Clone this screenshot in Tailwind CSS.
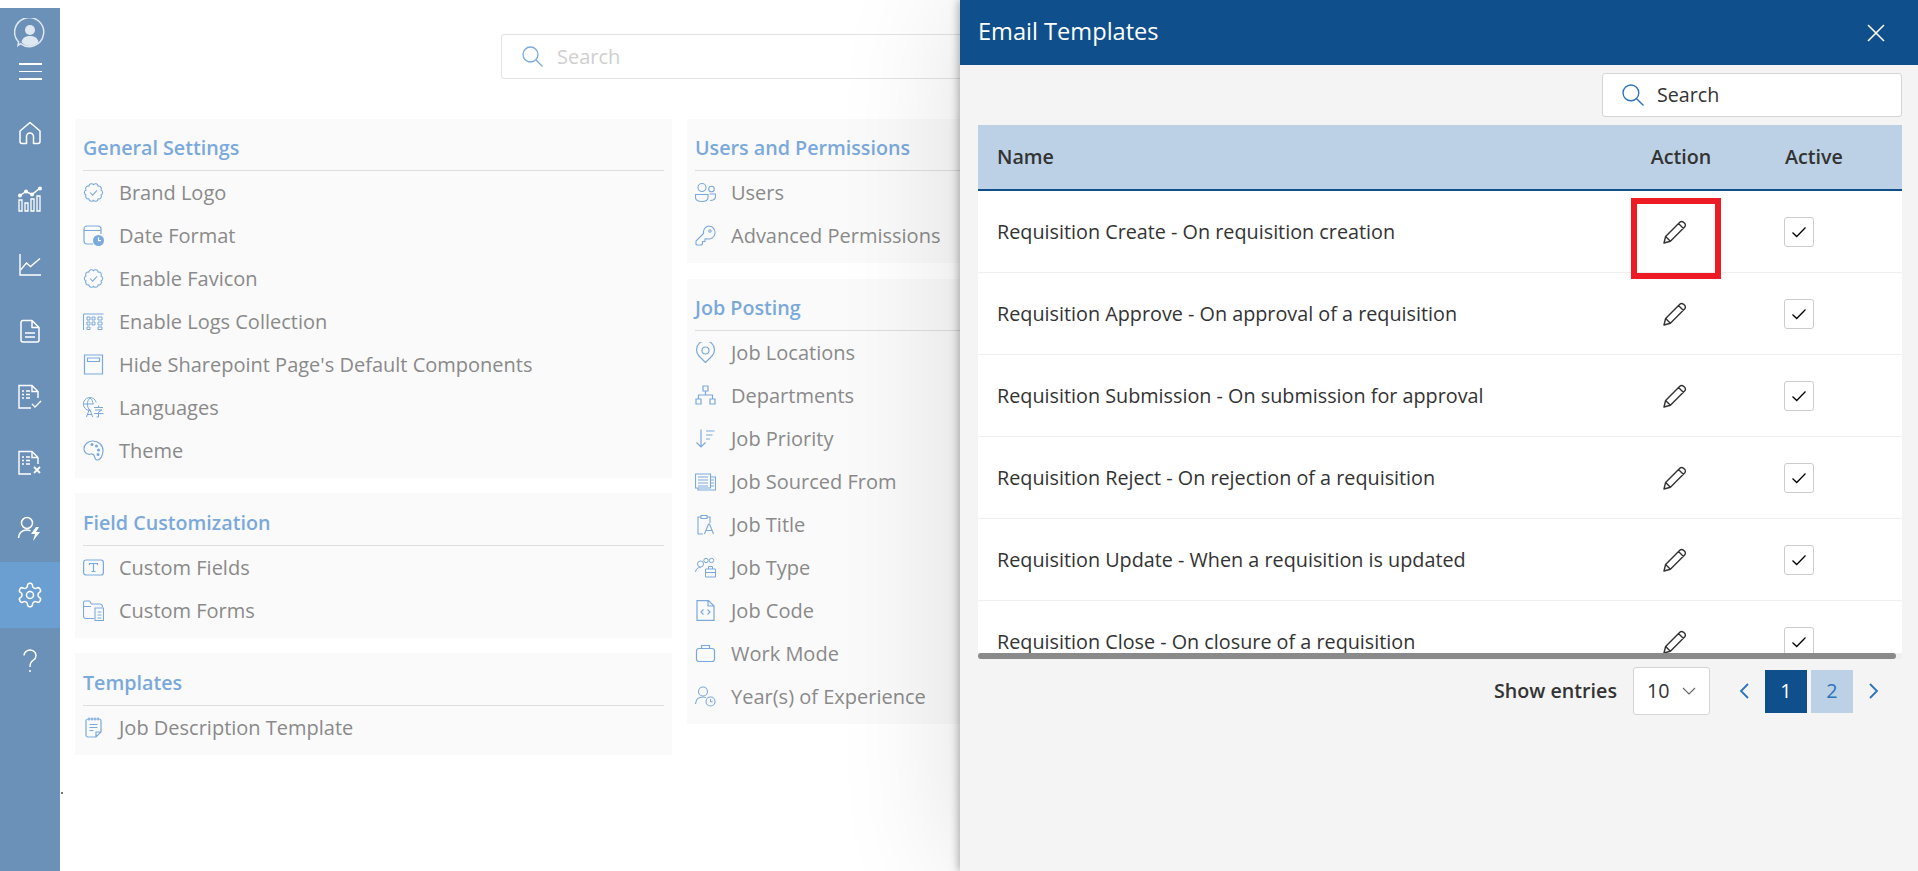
<!DOCTYPE html>
<html lang="en">
<head>
    <meta charset="UTF-8">
    <title>Email Templates</title>
    <script src="https://cdn.jsdelivr.net/npm/@tailwindcss/browser@4"></script>
</head>
<body class="bg-white overflow-hidden font-['Open_Sans',sans-serif]">
    <!-- icon sheet -->
    <svg class="hidden">
        <symbol id="pencil" viewBox="0 0 26 26"><path d="M2 24l1.600-6.500L17.800 3.200a2.600 2.600 0 0 1 3.700 0l1.100 1.100a2.600 2.600 0 0 1 0 3.700L8.400 22.300z M3.600 17.500l4.800 4.800 M16.500 4.500l5 5" fill="none" stroke="currentColor" stroke-width="1.400" stroke-linejoin="round"/></symbol>
        <symbol id="check" viewBox="0 0 16 16"><path d="M1.500 8.500l4.200 4 8.800-9" fill="none" stroke="currentColor" stroke-width="1.300"/></symbol>
        <symbol id="badge" viewBox="0 0 24 24"><path d="M12 3A3 3 0 0 1 17.290 4.720A3 3 0 0 1 20.560 9.220A3 3 0 0 1 20.560 14.780A3 3 0 0 1 17.290 19.280A3 3 0 0 1 12 21A3 3 0 0 1 6.710 19.280A3 3 0 0 1 3.440 14.780A3 3 0 0 1 3.440 9.220A3 3 0 0 1 6.710 4.720A3 3 0 0 1 12 3z M8 12l3 3 5-5.500"/></symbol>
    </svg>

    <div class="flex h-[871px]">
        <!-- sidebar -->
        <aside class="w-[60px] mt-2 bg-[#6c91b8] text-white flex flex-col items-center shrink-0">
            <div class="h-[92px] w-full flex flex-col items-center pt-[10px]">
                <svg class="w-[32px] h-[32px] text-[#dfe8f1]" viewBox="0 0 32 32" fill="none" stroke="currentColor" stroke-width="1.500"><path d="M4 27.500l2.500-1.800A14.500 14.500 0 1 0 4.600 24z"/><circle cx="16" cy="12" r="5" fill="currentColor" stroke="none"/><path d="M7.500 24c1-4.500 4.500-6 8.500-6s7.500 1.500 8.500 6c-2 2.500-5 4-8.500 4s-6.500-1.500-8.500-4z" fill="currentColor" stroke="none"/></svg>
                <div class="mt-[13px] w-[23px] flex flex-col gap-[6px]">
                    <div class="h-[1.500px] bg-white"></div>
                    <div class="h-[1.500px] bg-white"></div>
                    <div class="h-[1.500px] bg-white"></div>
                </div>
            </div>
            <div class="h-[66px] w-full flex items-center justify-center"><svg class="w-[24px] h-[24px]" viewBox="0 0 24 24" fill="none" stroke="currentColor" stroke-width="1.500" stroke-linejoin="round"><path d="M2 10L12 1.500 22 10v10.500a2 2 0 0 1-2 2h-4.500v-7a3.500 3.500 0 0 0-7 0v7H4a2 2 0 0 1-2-2z"/></svg></div>
            <div class="h-[66px] w-full flex items-center justify-center"><svg class="w-[26px] h-[26px]" viewBox="0 0 26 26" fill="none" stroke="currentColor" stroke-width="1.300"><path d="M2 14h3v11H2z M8 17h3v8H8z M14 13h3v12h-3z M20 10h3v15h-3z"/><path d="M3 9.500l6-4 6 3 8-6.500" stroke-width="1.500"/><circle cx="3" cy="9.500" r="1.300" fill="currentColor"/><circle cx="9" cy="5.500" r="1.300" fill="currentColor"/><circle cx="15" cy="8.500" r="1.300" fill="currentColor"/><circle cx="23" cy="2.500" r="1.300" fill="currentColor"/></svg></div>
            <div class="h-[66px] w-full flex items-center justify-center"><svg class="w-[24px] h-[24px]" viewBox="0 0 24 24" fill="none" stroke="currentColor" stroke-width="1.400"><path d="M2 1v21h21"/><path d="M2.500 17l6-7 4 3.500L22 5.500"/></svg></div>
            <div class="h-[66px] w-full flex items-center justify-center"><svg class="w-[24px] h-[24px]" viewBox="0 0 24 24" fill="none" stroke="currentColor" stroke-width="1.500" stroke-linejoin="round"><path d="M5 1.500h9l7 7V21a2 2 0 0 1-2 2H5a2 2 0 0 1-2-2V3.500a2 2 0 0 1 2-2z M14 1.500V8.500h7 M7 14h10 M7 18h10"/></svg></div>
            <div class="h-[66px] w-full flex items-center justify-center"><svg class="w-[26px] h-[26px]" viewBox="0 0 26 26" fill="none" stroke="currentColor" stroke-width="1.400"><path d="M14 24H2V1.500h13l6 6V14 M15 1.500v6h6"/><path d="M5 7h2M9 7h4M5 10.500h2M9 10.500h4M5 14h2M9 14h4"/><path d="M15 20l3 3 6-6"/></svg></div>
            <div class="h-[66px] w-full flex items-center justify-center"><svg class="w-[26px] h-[26px]" viewBox="0 0 26 26" fill="none" stroke="currentColor" stroke-width="1.400"><path d="M14 24H2V1.500h13l6 6V14 M15 1.500v6h6"/><path d="M5 7h2M9 7h4M5 10.500h2M9 10.500h4M5 14h2M9 14h4"/><path d="M17 17l6 6M23 17l-6 6" stroke-width="1.800"/></svg></div>
            <div class="h-[66px] w-full flex items-center justify-center"><svg class="w-[26px] h-[26px]" viewBox="0 0 26 26" fill="none" stroke="currentColor" stroke-width="1.500"><circle cx="10" cy="7" r="5.500"/><path d="M1.500 22c.5-5 3.500-8 8.500-8 1.500 0 2.500.3 3.500.8"/><path d="M19 11l-5 7h4l-2 7 7-9h-4l3-5z" fill="currentColor" stroke="none"/></svg></div>
            <div class="h-[66px] w-full bg-[#6b9fd2] flex items-center justify-center"><svg class="w-[28px] h-[28px]" viewBox="0 0 24 24" fill="none" stroke="currentColor" stroke-width="1.300" stroke-linejoin="round"><circle cx="12" cy="12" r="3"/><path d="M12.220 2h-.44a2 2 0 0 0-2 2v.18a2 2 0 0 1-1 1.730l-.43.25a2 2 0 0 1-2 0l-.15-.08a2 2 0 0 0-2.730.73l-.22.38a2 2 0 0 0 .73 2.730l.15.1a2 2 0 0 1 1 1.720v.51a2 2 0 0 1-1 1.740l-.15.09a2 2 0 0 0-.73 2.730l.22.38a2 2 0 0 0 2.730.73l.15-.08a2 2 0 0 1 2 0l.43.25a2 2 0 0 1 1 1.730V20a2 2 0 0 0 2 2h.44a2 2 0 0 0 2-2v-.18a2 2 0 0 1 1-1.730l.43-.25a2 2 0 0 1 2 0l.15.08a2 2 0 0 0 2.730-.73l.22-.39a2 2 0 0 0-.73-2.730l-.15-.08a2 2 0 0 1-1-1.740v-.5a2 2 0 0 1 1-1.740l.15-.09a2 2 0 0 0 .73-2.730l-.22-.38a2 2 0 0 0-2.730-.73l-.15.08a2 2 0 0 1-2 0l-.43-.25a2 2 0 0 1-1-1.730V4a2 2 0 0 0-2-2z"/></svg></div>
            <div class="h-[66px] w-full flex items-center justify-center"><svg class="w-[16px] h-[24px]" viewBox="0 0 16 24" fill="none" stroke="currentColor" stroke-width="1.400"><path d="M2 6.500a6 5.500 0 1 1 9.500 4.500C9 13 8 14 8 18"/><circle cx="8" cy="22" r="1" fill="currentColor" stroke="none"/></svg></div>
        </aside>

        <!-- settings page -->
        <main class="flex-1 pl-[15px]">
            <div class="ml-[426px] mt-[34px] w-[800px] h-[45px] border border-[#e3e3e3] rounded-[3px] flex items-center pl-[20px] gap-[14px]">
                <svg class="w-[21px] h-[21px] text-[#7aa9dc]" viewBox="0 0 21 21" fill="none" stroke="currentColor" stroke-width="1.300"><circle cx="8.500" cy="8.500" r="7.500"/><path d="M14 14l6.500 6.500"/></svg>
                <span class="text-[20px] text-[#cfcfcf]">Search</span>
            </div>
            <div class="mt-[40px] flex gap-[15px] items-start">
                <div class="w-[597px] flex flex-col gap-[15px]">
                    <section class="bg-[#fafafa] px-2 pb-[6px]">
                        <h2 class="h-[52px] pt-[15px] border-b border-[#dedede] text-[19.700px] leading-[28px] font-semibold text-[#7aa9dc]">General Settings</h2>
                        <div class="h-[43px] flex items-center gap-[15px] text-[20px] text-[#8a8a8a]"><svg class="w-[21px] h-[21px] text-[#7aa9dc] shrink-0" fill="none" stroke="currentColor" stroke-width="1.200"><use href="#badge"/></svg>Brand Logo</div>
                        <div class="h-[43px] flex items-center gap-[15px] text-[20px] text-[#8a8a8a]"><svg class="w-[21px] h-[21px] text-[#7aa9dc] shrink-0" viewBox="0 0 21 21" fill="none" stroke="currentColor" stroke-width="1.200"><path d="M10 19H4a3 3 0 0 1-3-3V4a3 3 0 0 1 3-3h11a3 3 0 0 1 3 3v5 M1 5.500h17"/><circle cx="15.500" cy="15.500" r="5.500" fill="currentColor" stroke="none"/><path d="M15.500 12.500v3.200h2.500" stroke="#fff"/></svg>Date Format</div>
                        <div class="h-[43px] flex items-center gap-[15px] text-[20px] text-[#8a8a8a]"><svg class="w-[21px] h-[21px] text-[#7aa9dc] shrink-0" fill="none" stroke="currentColor" stroke-width="1.200"><use href="#badge"/></svg>Enable Favicon</div>
                        <div class="h-[43px] flex items-center gap-[15px] text-[20px] text-[#8a8a8a]"><svg class="w-[21px] h-[21px] text-[#7aa9dc] shrink-0" viewBox="0 0 21 21" fill="none" stroke="currentColor" stroke-width="1"><path d="M.500 3v16M.500 3h20"/><path d="M4 6h3v3H4z M9 6h3v3H9z M15 6h4v3h-4z M4 11h3v3H4z M9 11h3v3H9z M15 11h4v3h-4z M4 16h3v2.500H4z M15 16h4v2.500h-4z"/></svg>Enable Logs Collection</div>
                        <div class="h-[43px] flex items-center gap-[15px] text-[20px] text-[#8a8a8a]"><svg class="w-[21px] h-[21px] text-[#7aa9dc] shrink-0" viewBox="0 0 21 21" fill="none" stroke="currentColor" stroke-width="1.200"><path d="M1.500 1h18v19h-18z M4.500 4h12v3.500h-12z"/></svg>Hide Sharepoint Page's Default Components</div>
                        <div class="h-[43px] flex items-center gap-[15px] text-[20px] text-[#8a8a8a]"><svg class="w-[21px] h-[21px] text-[#7aa9dc] shrink-0" viewBox="0 0 21 21" fill="none" stroke="currentColor" stroke-width="1"><path d="M7 13.500a6.500 6.500 0 1 1 6.200-8 M7 1c-3.500 3-3.500 9 0 12.500M7 1c2 1.500 3 4 3 6 M.500 7h10"/><path d="M3.500 20l2.800-7.500h.6L9.700 20M4.600 17.500h4 M11 10.500h9M15.500 8.500v2 M12 13h7l-3.500 2v5h-2 M11 16.500h9.500"/></svg>Languages</div>
                        <div class="h-[43px] flex items-center gap-[15px] text-[20px] text-[#8a8a8a]"><svg class="w-[21px] h-[21px] text-[#7aa9dc] shrink-0" viewBox="0 0 21 21" fill="none" stroke="currentColor" stroke-width="1.200"><path d="M10 1c5.500 0 10 4 10 9.500 0 5.500-3 9.500-5.500 9.500-2.500 0-2.500-2-3-3.500-.6-2-2-3-4-2.500C5 15 1 13 1 9c0-4.500 4-8 9-8z"/><circle cx="9" cy="4.500" r=".9" fill="currentColor"/><circle cx="13.500" cy="6" r=".9" fill="currentColor"/><circle cx="15.500" cy="10" r=".9" fill="currentColor"/><circle cx="15" cy="14.500" r=".9" fill="currentColor"/></svg>Theme</div>
                    </section>
                    <section class="bg-[#fafafa] px-2 pb-[6px]">
                        <h2 class="h-[53px] pt-[16px] border-b border-[#dedede] text-[19.700px] leading-[28px] font-semibold text-[#7aa9dc]">Field Customization</h2>
                        <div class="h-[43px] flex items-center gap-[15px] text-[20px] text-[#8a8a8a]"><svg class="w-[21px] h-[21px] text-[#7aa9dc] shrink-0" viewBox="0 0 21 21" fill="none" stroke="currentColor" stroke-width="1.200"><rect x=".600" y="3" width="19.800" height="15" rx="2.500"/><path d="M6.500 8V6.500h8V8M10.500 6.500v8M8.500 14.500h4"/></svg>Custom Fields</div>
                        <div class="h-[43px] flex items-center gap-[15px] text-[20px] text-[#8a8a8a]"><svg class="w-[21px] h-[21px] text-[#7aa9dc] shrink-0" viewBox="0 0 21 21" fill="none" stroke="currentColor" stroke-width="1.100"><path d="M11 18.500H3a2.500 2.500 0 0 1-2.500-2.500V2.500A1.500 1.500 0 0 1 2 1h4.500l2 3h8a3 3 0 0 1 3 3 M.500 6.500H8"/><path d="M12 8h8.500v12.500H12z M14.500 12h4M14.500 15h4M14.500 18h4"/></svg>Custom Forms</div>
                    </section>
                    <section class="bg-[#fafafa] px-2 pb-[6px]">
                        <h2 class="h-[53px] pt-[16px] border-b border-[#dedede] text-[19.700px] leading-[28px] font-semibold text-[#7aa9dc]">Templates</h2>
                        <div class="h-[43px] flex items-center gap-[15px] text-[20px] text-[#8a8a8a]"><svg class="w-[21px] h-[21px] text-[#7aa9dc] shrink-0" viewBox="0 0 21 21" fill="none" stroke="currentColor" stroke-width="1.200"><path d="M5 2h11a2 2 0 0 1 2 2v11l-5 5H5a2 2 0 0 1-2-2V4a2 2 0 0 1 2-2z M13 20v-5h5 M6.500 7.500h8M6.500 10.500h8M6.500 13.500h4 M6 .500v3M9 .500v3M12 .500v3M15 .500v3"/></svg>Job Description Template</div>
                    </section>
                </div>
                <div class="w-[597px] flex flex-col gap-[16px]">
                    <section class="bg-[#fafafa] px-2 pb-[6px]">
                        <h2 class="h-[52px] pt-[15px] border-b border-[#dedede] text-[19.700px] leading-[28px] font-semibold text-[#7aa9dc]">Users and Permissions</h2>
                        <div class="h-[43px] flex items-center gap-[15px] text-[20px] text-[#8a8a8a]"><svg class="w-[21px] h-[21px] text-[#7aa9dc] shrink-0" viewBox="0 0 21 21" fill="none" stroke="currentColor" stroke-width="1.100"><circle cx="7" cy="5.500" r="4"/><circle cx="16.500" cy="7" r="2.800"/><path d="M.500 12.500h12.500v3c0 2.500-2.500 4-6.200 4S.500 18 .500 15.500z M14.500 12h6v2.500c0 2.500-2 4-5.500 4"/></svg>Users</div>
                        <div class="h-[43px] flex items-center gap-[15px] text-[20px] text-[#8a8a8a]"><svg class="w-[21px] h-[21px] text-[#7aa9dc] shrink-0" viewBox="0 0 21 21" fill="none" stroke="currentColor" stroke-width="1.100"><path d="M13.500 1a6.500 6.500 0 1 1-1.500 12.800l-2 .2v2.500H7.500V19l-1 1H1.500l-.5-.5v-3.500l7.500-7.500A6.500 6.500 0 0 1 13.500 1z"/><circle cx="15" cy="6" r="1.200"/></svg>Advanced Permissions</div>
                    </section>
                    <section class="bg-[#fafafa] px-2 pb-[6px]">
                        <h2 class="h-[52px] pt-[15px] border-b border-[#dedede] text-[19.700px] leading-[28px] font-semibold text-[#7aa9dc]">Job Posting</h2>
                        <div class="h-[43px] flex items-center gap-[15px] text-[20px] text-[#8a8a8a]"><svg class="w-[21px] h-[21px] text-[#7aa9dc] shrink-0" viewBox="0 0 21 21" fill="none" stroke="currentColor" stroke-width="1.200"><path d="M10.500 20.500L4 14a9 9 0 1 1 13 0z"/><circle cx="10.500" cy="8.500" r="3.500"/></svg>Job Locations</div>
                        <div class="h-[43px] flex items-center gap-[15px] text-[20px] text-[#8a8a8a]"><svg class="w-[21px] h-[21px] text-[#7aa9dc] shrink-0" viewBox="0 0 21 21" fill="none" stroke="currentColor" stroke-width="1.200"><path d="M8 1h5v5H8z M1 14h5v5H1z M15 14h5v5h-5z M10.500 6v4 M3.500 14v-4h14v4"/></svg>Departments</div>
                        <div class="h-[43px] flex items-center gap-[15px] text-[20px] text-[#8a8a8a]"><svg class="w-[21px] h-[21px] text-[#7aa9dc] shrink-0" viewBox="0 0 21 21" fill="none" stroke="currentColor" stroke-width="1.200"><path d="M6 1.500v17.500M1.500 14.500L6 19l4.500-4.500 M11 3h8.500M11 7h6.500M11 11h4"/></svg>Job Priority</div>
                        <div class="h-[43px] flex items-center gap-[15px] text-[20px] text-[#8a8a8a]"><svg class="w-[21px] h-[21px] text-[#7aa9dc] shrink-0" viewBox="0 0 21 21" fill="none" stroke="currentColor" stroke-width="1.100"><path d="M.500 3h15v14H.500z M15.500 6h5v13H3v-2 M3 6h10M3 9h10M3 12h10M3 15h10M16 9h3M16 12h3M16 15h3"/></svg>Job Sourced From</div>
                        <div class="h-[43px] flex items-center gap-[15px] text-[20px] text-[#8a8a8a]"><svg class="w-[21px] h-[21px] text-[#7aa9dc] shrink-0" viewBox="0 0 21 21" fill="none" stroke="currentColor" stroke-width="1.100"><path d="M8 20H3V3h3 M12 3h3v6 M6 1.500h6v3H6z"/><path d="M9.500 20l4-10h1l4 10M11 16.500h6"/></svg>Job Title</div>
                        <div class="h-[43px] flex items-center gap-[15px] text-[20px] text-[#8a8a8a]"><svg class="w-[21px] h-[21px] text-[#7aa9dc] shrink-0" viewBox="0 0 21 21" fill="none" stroke="currentColor" stroke-width="1"><circle cx="5.500" cy="7" r="3"/><circle cx="11" cy="3.500" r="2.200"/><circle cx="16.500" cy="3.500" r="2.200"/><path d="M.500 15c.3-3 2-4.500 5-4.500 M10.500 12h10v8h-10z M10.500 15.500h10 M13.500 12V9.500h4V12"/></svg>Job Type</div>
                        <div class="h-[43px] flex items-center gap-[15px] text-[20px] text-[#8a8a8a]"><svg class="w-[21px] h-[21px] text-[#7aa9dc] shrink-0" viewBox="0 0 21 21" fill="none" stroke="currentColor" stroke-width="1.200"><path d="M2 .600h11.500L19 6v14.400H2z M13 .600V6h6 M8.500 9.500L6 12l2.500 2.500 M12.500 9.500L15 12l-2.500 2.500"/></svg>Job Code</div>
                        <div class="h-[43px] flex items-center gap-[15px] text-[20px] text-[#8a8a8a]"><svg class="w-[21px] h-[21px] text-[#7aa9dc] shrink-0" viewBox="0 0 21 21" fill="none" stroke="currentColor" stroke-width="1.200"><rect x="1.500" y="5.500" width="18" height="13" rx="2.500"/><path d="M6.500 5.500v-3h8v3"/></svg>Work Mode</div>
                        <div class="h-[43px] flex items-center gap-[15px] text-[20px] text-[#8a8a8a]"><svg class="w-[21px] h-[21px] text-[#7aa9dc] shrink-0" viewBox="0 0 21 21" fill="none" stroke="currentColor" stroke-width="1.100"><circle cx="8" cy="5.500" r="4.500"/><path d="M.500 18c.3-4.500 3-7 7.500-7 1 0 2 .2 3 .5"/><circle cx="15.500" cy="15.500" r="4.500"/><path d="M15.500 13v2.700h2.200"/></svg>Year(s) of Experience</div>
                    </section>
                </div>
            </div>
        </main>
    </div>

    <div class="absolute left-[61px] top-[792px] w-[2px] h-[2px] bg-[#777]"></div>

    <!-- email templates panel -->
    <div class="absolute top-0 right-0 bottom-0 w-[958px] bg-[#f4f4f4] flex flex-col shadow-[-2px_0_8px_rgba(0,0,0,0.28),-10px_0_110px_rgba(0,0,0,0.11)]">
        <header class="h-[65px] shrink-0 bg-[#0f4f8b] flex items-center justify-between pl-[18px] pr-[33px] text-white">
            <h1 class="text-[23.600px] -mt-[2px]">Email Templates</h1>
            <svg class="w-[18px] h-[18px]" viewBox="0 0 18 18" fill="none" stroke="currentColor" stroke-width="1.600"><path d="M1 1l16 16M17 1L1 17"/></svg>
        </header>
        <div class="flex justify-end pr-[16px] pt-2">
            <div class="w-[300px] h-[44px] bg-white border border-[#d5d5d5] rounded-[3px] flex items-center pl-[19px] gap-[13px]">
                <svg class="w-[22px] h-[22px] text-[#2a73bd]" viewBox="0 0 21 21" fill="none" stroke="currentColor" stroke-width="1.300"><circle cx="8.500" cy="8.500" r="7.500"/><path d="M14 14l6.500 6.500"/></svg>
                <span class="text-[19.700px] text-[#333]">Search</span>
            </div>
        </div>
        <div class="ml-[18px] mr-[16px] mt-2 h-[528px] bg-white overflow-hidden text-[19.800px] text-[#333]">
            <div class="h-[66px] bg-[#bcd1e5] border-b-2 border-[#0f4f8b] flex items-center pl-[19px] pr-[31px] font-semibold text-[19.700px]">
                <div class="flex-1">Name</div>
                <div class="w-[152px] text-center">Action</div>
                <div class="w-[114px] text-center">Active</div>
            </div>
            <div class="h-[82px] border-b border-[#efefef] flex items-center pl-[19px] pr-[31px]">
                <div class="flex-1">Requisition Create - On requisition creation</div>
                <div class="w-[152px] flex justify-center pr-[12px]"><svg class="w-[26px] h-[26px]"><use href="#pencil"/></svg></div>
                <div class="w-[114px] flex justify-center pr-[30px]"><div class="w-[30px] h-[30px] border border-[#ccc] rounded-[3px] flex items-center justify-center"><svg class="w-[16px] h-[16px] text-black"><use href="#check"/></svg></div></div>
            </div>
            <div class="h-[82px] border-b border-[#efefef] flex items-center pl-[19px] pr-[31px]">
                <div class="flex-1">Requisition Approve - On approval of a requisition</div>
                <div class="w-[152px] flex justify-center pr-[12px]"><svg class="w-[26px] h-[26px]"><use href="#pencil"/></svg></div>
                <div class="w-[114px] flex justify-center pr-[30px]"><div class="w-[30px] h-[30px] border border-[#ccc] rounded-[3px] flex items-center justify-center"><svg class="w-[16px] h-[16px] text-black"><use href="#check"/></svg></div></div>
            </div>
            <div class="h-[82px] border-b border-[#efefef] flex items-center pl-[19px] pr-[31px]">
                <div class="flex-1">Requisition Submission - On submission for approval</div>
                <div class="w-[152px] flex justify-center pr-[12px]"><svg class="w-[26px] h-[26px]"><use href="#pencil"/></svg></div>
                <div class="w-[114px] flex justify-center pr-[30px]"><div class="w-[30px] h-[30px] border border-[#ccc] rounded-[3px] flex items-center justify-center"><svg class="w-[16px] h-[16px] text-black"><use href="#check"/></svg></div></div>
            </div>
            <div class="h-[82px] border-b border-[#efefef] flex items-center pl-[19px] pr-[31px]">
                <div class="flex-1">Requisition Reject - On rejection of a requisition</div>
                <div class="w-[152px] flex justify-center pr-[12px]"><svg class="w-[26px] h-[26px]"><use href="#pencil"/></svg></div>
                <div class="w-[114px] flex justify-center pr-[30px]"><div class="w-[30px] h-[30px] border border-[#ccc] rounded-[3px] flex items-center justify-center"><svg class="w-[16px] h-[16px] text-black"><use href="#check"/></svg></div></div>
            </div>
            <div class="h-[82px] border-b border-[#efefef] flex items-center pl-[19px] pr-[31px]">
                <div class="flex-1">Requisition Update - When a requisition is updated</div>
                <div class="w-[152px] flex justify-center pr-[12px]"><svg class="w-[26px] h-[26px]"><use href="#pencil"/></svg></div>
                <div class="w-[114px] flex justify-center pr-[30px]"><div class="w-[30px] h-[30px] border border-[#ccc] rounded-[3px] flex items-center justify-center"><svg class="w-[16px] h-[16px] text-black"><use href="#check"/></svg></div></div>
            </div>
            <div class="h-[82px] border-b border-[#efefef] flex items-center pl-[19px] pr-[31px]">
                <div class="flex-1">Requisition Close - On closure of a requisition</div>
                <div class="w-[152px] flex justify-center pr-[12px]"><svg class="w-[26px] h-[26px]"><use href="#pencil"/></svg></div>
                <div class="w-[114px] flex justify-center pr-[30px]"><div class="w-[30px] h-[30px] border border-[#ccc] rounded-[3px] flex items-center justify-center"><svg class="w-[16px] h-[16px] text-black"><use href="#check"/></svg></div></div>
            </div>
        </div>
        <div class="ml-[18px] mr-[16px] h-[6px] bg-[#f0f0f0]"><div class="h-[6px] w-[918px] rounded-full bg-[#8a8a8a]"></div></div>
        <div class="flex justify-end items-center h-[64px] text-[19.700px] text-[#333]">
            <span class="font-semibold">Show entries</span>
            <div class="ml-[16px] w-[77px] h-[48px] bg-white border border-[#d5d5d5] rounded-[3px] flex items-center justify-between pl-[13px] pr-[13px]">10<svg class="w-[14px] h-[8px] text-[#666]" viewBox="0 0 14 8" fill="none" stroke="currentColor" stroke-width="1.100"><path d="M1 1l6 6 6-6"/></svg></div>
            <svg class="ml-[29px] w-[10px] h-[16px] text-[#2a73bd]" viewBox="0 0 10 16" fill="none" stroke="currentColor" stroke-width="1.800"><path d="M9 1L2 8l7 7"/></svg>
            <div class="ml-[16px] w-[42px] h-[43px] bg-[#0f4f8b] text-white flex items-center justify-center">1</div>
            <div class="ml-[4px] w-[42px] h-[43px] bg-[#bcd1e5] text-[#2a73bd] flex items-center justify-center">2</div>
            <svg class="ml-[16px] mr-[39px] w-[10px] h-[16px] text-[#2a73bd]" viewBox="0 0 10 16" fill="none" stroke="currentColor" stroke-width="1.800"><path d="M1 1l7 7-7 7"/></svg>
        </div>
        <!-- red highlight annotation -->
        <div class="absolute left-[671px] top-[198px] w-[90px] h-[81px] border-[6px] border-[#ed1c24]"></div>
    </div>
</body>
</html>
